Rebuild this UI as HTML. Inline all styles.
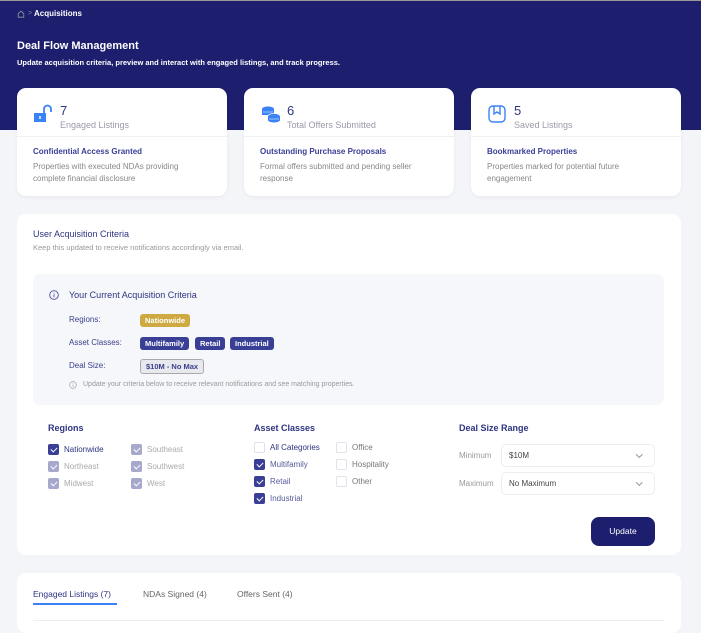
<!DOCTYPE html>
<html><head><meta charset="utf-8">
<style>
*{box-sizing:border-box;margin:0;padding:0}
body{width:701px;height:621px;overflow:hidden;background:#f4f5f9;font-family:"Liberation Sans",sans-serif;position:relative;color:#333}
.abs{position:absolute}
.hdr{left:0;top:0;width:701px;height:130px;background:#1d1f6e;border-top:1px solid #999}
.card{background:#fff;border-radius:9px;box-shadow:0 1px 3px rgba(0,0,0,.06);top:88px;width:210px;height:108px}
.card .num{position:absolute;left:43px;top:15px;font-size:13px;color:#2e3480}
.card .lbl{position:absolute;left:43px;top:32px;font-size:9px;color:#999aa8}
.card .div{position:absolute;left:0;right:0;top:48px;border-top:1px solid #f0f0f3}
.card .t{position:absolute;left:16px;top:59px;font-size:8px;font-weight:bold;color:#3a3f96}
.card .d{position:absolute;left:16px;top:73px;font-size:8px;color:#888;line-height:12px;width:172px}
.card svg{position:absolute;left:16px;top:16px}
.panel{left:17px;top:214px;width:664px;height:341px;background:#fff;border-radius:9px}
.box{left:33px;top:274px;width:631px;height:131px;background:#f6f7fa;border-radius:7px}
.k{font-size:8px;color:#3a3f8a}
.tag{font-size:7.5px;font-weight:bold;color:#fff;background:#3a3f96;border-radius:3px;padding:2px 5px;line-height:9px}
h4{font-size:9px;color:#2e3480;font-weight:bold}
.cb{width:11px;height:11px;border-radius:2px;background:#3a3f96;display:inline-block}
.cb.l{background:#a6a8cc}
.cb.e{background:#fff;border:1px solid #e2e3ea}
.cb:not(.e)::after{content:"";display:block;width:3px;height:5px;border:solid #fff;border-width:0 1.2px 1.2px 0;transform:rotate(45deg);margin:2px 0 0 4px}
.opt{font-size:8px;display:flex;align-items:center;gap:5px}
.sel{border:1px solid #eceef2;border-radius:5px;width:154px;height:23px;font-size:8px;color:#444;padding:6px 7px;background:#fff}
.sel::after{content:"";position:absolute;right:13px;top:7px;width:3.5px;height:3.5px;border:solid #999;border-width:0 1px 1px 0;transform:rotate(45deg)}
</style></head><body>
<div class="abs hdr"></div>
<svg class="abs" style="left:17px;top:10px" width="8" height="8" viewBox="0 0 10 10"><path d="M1.5 4.5L5 1.5l3.5 3V9h-7z" fill="none" stroke="#999" stroke-width="1"/></svg>
<div class="abs" style="left:28px;top:10px;font-size:7px;color:#888">&gt;</div>
<div class="abs" style="left:34px;top:9px;font-size:8px;font-weight:bold;color:#fff">Acquisitions</div>
<div class="abs" style="left:17px;top:40px;font-size:11px;font-weight:bold;color:#fff">Deal Flow Management</div>
<div class="abs" style="left:17px;top:58px;font-size:7.5px;font-weight:bold;color:#fff">Update acquisition criteria, preview and interact with engaged listings, and track progress.</div>

<div class="abs card" style="left:17px">
<svg width="20" height="20" viewBox="0 0 20 20"><path d="M11 9V5a3.5 3.5 0 0 1 7 0v3" fill="none" stroke="#3b82f6" stroke-width="1.8"/><rect x="1" y="9" width="12" height="9" fill="#3b82f6"/><rect x="6.3" y="12" width="1.4" height="3" fill="#fff"/></svg>
<div class="num">7</div><div class="lbl">Engaged Listings</div><div class="div"></div>
<div class="t">Confidential Access Granted</div><div class="d">Properties with executed NDAs providing complete financial disclosure</div></div>
<div class="abs card" style="left:244px">
<svg width="22" height="20" viewBox="0 0 22 20"><ellipse cx="8" cy="5" rx="6" ry="2.5" fill="#3b82f6"/><rect x="2" y="5" width="12" height="6" fill="#3b82f6"/><ellipse cx="14" cy="12" rx="6" ry="2.5" fill="#3b82f6" stroke="#fff" stroke-width=".8"/><rect x="8" y="12" width="12" height="4" fill="#3b82f6"/><ellipse cx="14" cy="16" rx="6" ry="2.5" fill="#3b82f6"/><path d="M3 8h10M9 15h10" stroke="#fff" stroke-width=".6"/></svg>
<div class="num">6</div><div class="lbl">Total Offers Submitted</div><div class="div"></div>
<div class="t">Outstanding Purchase Proposals</div><div class="d">Formal offers submitted and pending seller response</div></div>
<div class="abs card" style="left:471px">
<svg width="20" height="20" viewBox="0 0 20 20"><rect x="2" y="2" width="16" height="16" rx="4" fill="none" stroke="#3b82f6" stroke-width="1.4"/><path d="M7 2.5V10l3-2 3 2V2.5" fill="none" stroke="#3b82f6" stroke-width="1.4"/></svg>
<div class="num">5</div><div class="lbl">Saved Listings</div><div class="div"></div>
<div class="t">Bookmarked Properties</div><div class="d">Properties marked for potential future engagement</div></div>

<div class="abs panel"></div>
<div class="abs" style="left:33px;top:229px;font-size:9px;color:#2e3480">User Acquisition Criteria</div>
<div class="abs" style="left:33px;top:243px;font-size:7.5px;color:#999">Keep this updated to receive notifications accordingly via email.</div>
<div class="abs box"></div>
<svg class="abs" style="left:49px;top:290px" width="10" height="10" viewBox="0 0 10 10"><circle cx="5" cy="5" r="4.3" fill="none" stroke="#4a4f9a" stroke-width=".9"/><path d="M5 4.3v3M5 2.6v.8" stroke="#4a4f9a" stroke-width=".9"/></svg>
<div class="abs" style="left:69px;top:290px;font-size:9px;color:#2e3480">Your Current Acquisition Criteria</div>
<div class="abs k" style="left:69px;top:315px">Regions:</div>
<div class="abs tag" style="left:140px;top:314px;background:#cfa941">Nationwide</div>
<div class="abs k" style="left:69px;top:338px">Asset Classes:</div>
<div class="abs tag" style="left:140px;top:337px">Multifamily</div>
<div class="abs tag" style="left:195px;top:337px">Retail</div>
<div class="abs tag" style="left:230px;top:337px">Industrial</div>
<div class="abs k" style="left:69px;top:361px">Deal Size:</div>
<div class="abs tag" style="left:140px;top:359px;background:#e8e9ef;color:#3a3f8a;border:1px solid #aaa;padding:2px 5px">$10M - No Max</div>
<svg class="abs" style="left:69px;top:381px" width="8" height="8" viewBox="0 0 10 10"><circle cx="5" cy="5" r="4.2" fill="none" stroke="#aaa" stroke-width=".9"/><path d="M5 4.3v3M5 2.6v.8" stroke="#aaa" stroke-width=".9"/></svg>
<div class="abs" style="left:83px;top:381px;font-size:7px;color:#999">Update your criteria below to receive relevant notifications and see matching properties.</div>

<h4 class="abs" style="left:48px;top:423px">Regions</h4>
<div class="abs opt" style="left:48px;top:444px;color:#2e3480"><span class="cb"></span>Nationwide</div>
<div class="abs opt" style="left:48px;top:461px;color:#aaa"><span class="cb l"></span>Northeast</div>
<div class="abs opt" style="left:48px;top:478px;color:#aaa"><span class="cb l"></span>Midwest</div>
<div class="abs opt" style="left:131px;top:444px;color:#aaa"><span class="cb l"></span>Southeast</div>
<div class="abs opt" style="left:131px;top:461px;color:#aaa"><span class="cb l"></span>Southwest</div>
<div class="abs opt" style="left:131px;top:478px;color:#aaa"><span class="cb l"></span>West</div>

<h4 class="abs" style="left:254px;top:423px">Asset Classes</h4>
<div class="abs opt" style="left:254px;top:442px;color:#2e3480"><span class="cb e"></span>All Categories</div>
<div class="abs opt" style="left:254px;top:459px;color:#555a9a"><span class="cb"></span>Multifamily</div>
<div class="abs opt" style="left:254px;top:476px;color:#555a9a"><span class="cb"></span>Retail</div>
<div class="abs opt" style="left:254px;top:493px;color:#555a9a"><span class="cb"></span>Industrial</div>
<div class="abs opt" style="left:336px;top:442px;color:#777"><span class="cb e"></span>Office</div>
<div class="abs opt" style="left:336px;top:459px;color:#777"><span class="cb e"></span>Hospitality</div>
<div class="abs opt" style="left:336px;top:476px;color:#777"><span class="cb e"></span>Other</div>

<h4 class="abs" style="left:459px;top:423px">Deal Size Range</h4>
<div class="abs" style="left:459px;top:451px;font-size:8px;color:#999">Minimum</div>
<div class="abs sel" style="left:501px;top:444px">$10M</div>
<div class="abs" style="left:459px;top:479px;font-size:8px;color:#999">Maximum</div>
<div class="abs sel" style="left:501px;top:472px">No Maximum</div>
<div class="abs" style="left:591px;top:517px;width:64px;height:29px;border-radius:8px;background:#1d1f6e;color:#fff;font-size:8.5px;text-align:center;line-height:29px">Update</div>

<div class="abs" style="left:17px;top:573px;width:664px;height:60px;background:#fff;border-radius:9px"></div>
<div class="abs" style="left:33px;top:589px;font-size:8.5px;color:#2e3480">Engaged Listings (7)</div>
<div class="abs" style="left:33px;top:603px;width:84px;height:2px;background:#3b82f6"></div>
<div class="abs" style="left:143px;top:589px;font-size:8.5px;color:#666">NDAs Signed (4)</div>
<div class="abs" style="left:237px;top:589px;font-size:8.5px;color:#666">Offers Sent (4)</div>
<div class="abs" style="left:33px;top:620px;width:631px;border-top:1px solid #eee"></div>
</body></html>
